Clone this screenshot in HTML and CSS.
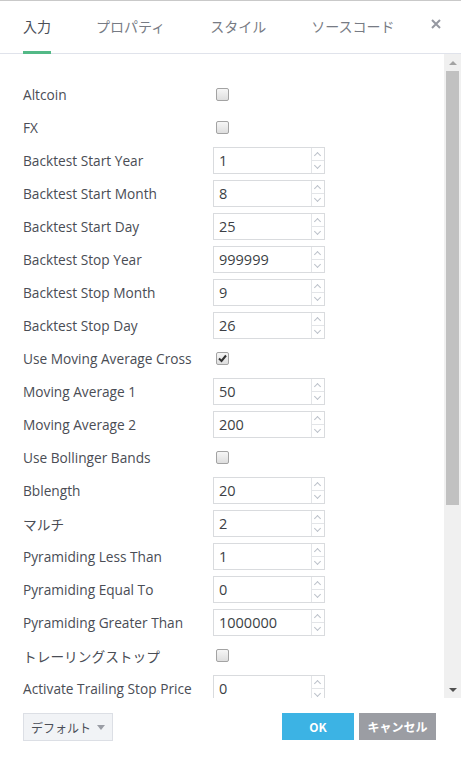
FILE: index.html
```html
<!DOCTYPE html>
<html lang="ja">
<head>
<meta charset="utf-8">
<link rel="stylesheet" href="styles.css">
</head>
<body>
<div class="dialog">
  <div class="header">
    <div class="tab active">入力</div>
    <div class="tab">プロパティ</div>
    <div class="tab">スタイル</div>
    <div class="tab">ソースコード</div>
    <div class="close"><svg width="10" height="10" viewBox="0 0 10 10"><path d="M1 1L9 9M9 1L1 9" stroke="#9598a1" stroke-width="2"/></svg></div>
  </div>
  <div class="body">
    <div class="content">
      <div class="row"><div class="label">Altcoin</div><div class="value"><span class="check"></span></div></div>
      <div class="row"><div class="label">FX</div><div class="value"><span class="check"></span></div></div>
      <div class="row"><div class="label">Backtest Start Year</div><div class="value"><div class="num"><span class="val">1</span><span class="spin"><span class="up"></span><span class="down"></span></span></div></div></div>
      <div class="row"><div class="label">Backtest Start Month</div><div class="value"><div class="num"><span class="val">8</span><span class="spin"><span class="up"></span><span class="down"></span></span></div></div></div>
      <div class="row"><div class="label">Backtest Start Day</div><div class="value"><div class="num"><span class="val">25</span><span class="spin"><span class="up"></span><span class="down"></span></span></div></div></div>
      <div class="row"><div class="label">Backtest Stop Year</div><div class="value"><div class="num"><span class="val">999999</span><span class="spin"><span class="up"></span><span class="down"></span></span></div></div></div>
      <div class="row"><div class="label">Backtest Stop Month</div><div class="value"><div class="num"><span class="val">9</span><span class="spin"><span class="up"></span><span class="down"></span></span></div></div></div>
      <div class="row"><div class="label">Backtest Stop Day</div><div class="value"><div class="num"><span class="val">26</span><span class="spin"><span class="up"></span><span class="down"></span></span></div></div></div>
      <div class="row"><div class="label">Use Moving Average Cross</div><div class="value"><span class="check checked"><svg width="9" height="9" viewBox="0 0 9 9"><path d="M1 4.5L3.5 7L8 1.5" fill="none" stroke="#333" stroke-width="2"/></svg></span></div></div>
      <div class="row"><div class="label">Moving Average 1</div><div class="value"><div class="num"><span class="val">50</span><span class="spin"><span class="up"></span><span class="down"></span></span></div></div></div>
      <div class="row"><div class="label">Moving Average 2</div><div class="value"><div class="num"><span class="val">200</span><span class="spin"><span class="up"></span><span class="down"></span></span></div></div></div>
      <div class="row"><div class="label">Use Bollinger Bands</div><div class="value"><span class="check"></span></div></div>
      <div class="row"><div class="label">Bblength</div><div class="value"><div class="num"><span class="val">20</span><span class="spin"><span class="up"></span><span class="down"></span></span></div></div></div>
      <div class="row"><div class="label">マルチ</div><div class="value"><div class="num"><span class="val">2</span><span class="spin"><span class="up"></span><span class="down"></span></span></div></div></div>
      <div class="row"><div class="label">Pyramiding Less Than</div><div class="value"><div class="num"><span class="val">1</span><span class="spin"><span class="up"></span><span class="down"></span></span></div></div></div>
      <div class="row"><div class="label">Pyramiding Equal To</div><div class="value"><div class="num"><span class="val">0</span><span class="spin"><span class="up"></span><span class="down"></span></span></div></div></div>
      <div class="row"><div class="label">Pyramiding Greater Than</div><div class="value"><div class="num"><span class="val">1000000</span><span class="spin"><span class="up"></span><span class="down"></span></span></div></div></div>
      <div class="row"><div class="label">トレーリングストップ</div><div class="value"><span class="check"></span></div></div>
      <div class="row"><div class="label">Activate Trailing Stop Price</div><div class="value"><div class="num"><span class="val">0</span><span class="spin"><span class="up"></span><span class="down"></span></span></div></div></div>
    </div>
    <div class="scrollbar">
      <div class="sb-btn"><span class="tri-up"></span></div>
      <div class="sb-track"><div class="sb-thumb"></div></div>
      <div class="sb-btn"><span class="tri-down"></span></div>
    </div>
  </div>
  <div class="footer">
    <div class="btn-default">デフォルト <span class="caret"></span></div>
    <div class="spacer"></div>
    <div class="btn ok">OK</div>
    <div class="btn cancel">キャンセル</div>
  </div>
</div>
</body>
</html>
```

FILE: styles.css
```css
html, body {
  margin: 0;
  padding: 0;
  background: #fff;
}
body {
  font-family: "Open Sans", "Noto Sans CJK JP", sans-serif;
  color: #4a4d55;
  width: 461px;
  height: 764px;
  overflow: hidden;
}
.dialog {
  border-top: 1px solid #c9c9c9;
  height: 763px;
  display: flex;
  flex-direction: column;
}
.header {
  height: 52px;
  border-bottom: 1px solid #e0e3eb;
  display: flex;
  align-items: stretch;
  padding: 0 20px 0 23px;
}
.tab {
  flex: none;
  white-space: nowrap;
  display: flex;
  align-items: center;
  font-family: "Noto Sans CJK JP", sans-serif;
  font-size: 14px;
  color: #777b84;
  border-bottom: 3px solid transparent;
  margin-bottom: -1px;
}
.tab + .tab {
  margin-left: 45px;
}
.tab.active {
  color: #4a4e57;
  border-bottom-color: #53b987;
}
.close {
  flex: none;
  margin-left: auto;
  display: flex;
  align-items: flex-start;
  padding-top: 18px;
}
.body {
  height: 644px;
  display: flex;
  overflow: hidden;
}
.content {
  flex: 1;
  padding: 24px 0 0 23px;
  overflow: hidden;
}
.row {
  height: 33px;
  display: flex;
  align-items: center;
  font-size: 13.7px;
}
.label {
  width: 190px;
  flex: none;
  white-space: nowrap;
}
.value {
  display: flex;
  align-items: center;
}
.check {
  width: 11px;
  height: 11px;
  margin-left: 3px;
  border: 1px solid #a3a3a3;
  border-radius: 2px;
  background: linear-gradient(#f6f6f6, #dedede);
  display: flex;
  align-items: center;
  justify-content: center;
}
.num {
  width: 110px;
  height: 25px;
  border: 1px solid #d9dbde;
  display: flex;
}
.val {
  flex: 1;
  padding-left: 5px;
  font-size: 14.5px;
  color: #3c3f45;
  display: flex;
  align-items: center;
}
.spin {
  width: 12px;
  border-left: 1px solid #e3e5e8;
  display: flex;
  flex-direction: column;
}
.spin span {
  flex: 1;
  position: relative;
}
.spin .up {
  border-bottom: 1px solid #e3e5e8;
}
.spin .up::after, .spin .down::after {
  content: "";
  position: absolute;
  left: 3px;
  width: 4px;
  height: 4px;
  border-left: 1px solid #bcc2ca;
  border-top: 1px solid #bcc2ca;
}
.spin .up::after {
  top: 5px;
  transform: rotate(45deg);
}
.spin .down::after {
  top: 2px;
  transform: rotate(225deg);
}
.scrollbar {
  width: 17px;
  flex: none;
  background: #f0f0f0;
  display: flex;
  flex-direction: column;
}
.sb-btn {
  height: 17px;
  display: flex;
  align-items: center;
  justify-content: center;
}
.tri-up {
  width: 0; height: 0;
  border-left: 4px solid transparent;
  border-right: 4px solid transparent;
  border-bottom: 4px solid #a3a3a3;
}
.tri-down {
  width: 0; height: 0;
  border-left: 4px solid transparent;
  border-right: 4px solid transparent;
  border-top: 4px solid #505050;
}
.sb-track {
  flex: 1;
  padding: 0 2px;
}
.sb-thumb {
  height: 434px;
  background: #c1c1c1;
}
.footer {
  flex: 1;
  display: flex;
  align-items: flex-start;
  padding: 15px 25px 0 23px;
  gap: 5px;
}
.spacer { flex: 1; }
.btn-default {
  width: 88px;
  height: 26px;
  border: 1px solid #dcdfe5;
  background: #f1f3f6;
  display: flex;
  align-items: center;
  justify-content: center;
  gap: 6px;
  font-family: "Noto Sans CJK JP", sans-serif;
  font-size: 12px;
  color: #4a4e57;
}
.caret {
  width: 0; height: 0;
  border-left: 4px solid transparent;
  border-right: 4px solid transparent;
  border-top: 5px solid #9a9da5;
}
.btn {
  height: 27px;
  display: flex;
  align-items: center;
  justify-content: center;
  color: #fff;
  font-weight: bold;
  font-family: "Noto Sans CJK JP", sans-serif;
  font-size: 12px;
}
.ok {
  width: 72px;
  background: #3cb3e4;
}
.cancel {
  width: 77px;
  background: #9b9da3;
}
```
